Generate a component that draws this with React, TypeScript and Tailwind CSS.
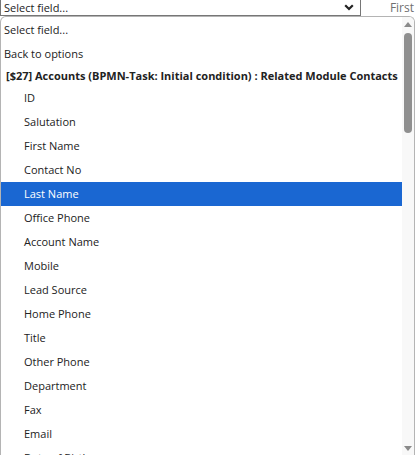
import React from "react";

const children = [
  "ID",
  "Salutation",
  "First Name",
  "Contact No",
  "Last Name",
  "Office Phone",
  "Account Name",
  "Mobile",
  "Lead Source",
  "Home Phone",
  "Title",
  "Other Phone",
  "Department",
  "Fax",
  "Email",
  "Date of Birth",
];

export default function App() {
  return (
    <div
      className="w-[415px] h-[455px] overflow-hidden bg-white text-[#222]"
      style={{ fontFamily: '"Open Sans", sans-serif' }}
    >
      <div className="flex h-[16px]">
        <div className="relative w-[361px] h-[16px] border-x border-b border-[#767676] flex items-center pl-[3px] shrink-0">
          <span className="text-[11px] leading-[15px]">Select field...</span>
          <svg
            className="absolute left-[343px] top-[4px]"
            width="10"
            height="7"
            viewBox="0 0 10 7"
          >
            <path d="M1.2 1.2 L5 5 L8.8 1.2" fill="none" stroke="#222" strokeWidth="2.2" />
          </svg>
        </div>
        <div className="flex-1 min-w-0 flex justify-end pr-[1px] overflow-visible">
          <span className="text-[12px] leading-[15px] text-[#707070] whitespace-nowrap">First</span>
        </div>
      </div>
      <div className="h-[439px] border border-b-0 border-[#b4b4b4] rounded-t-[6px] flex overflow-hidden">
        <div className="flex-1 min-w-0 overflow-hidden flex flex-col text-[11px] pt-[1px]">
          <div className="h-[24px] flex items-center pl-[3px] shrink-0">Select field...</div>
          <div className="h-[24px] flex items-center pl-[3px] shrink-0">Back to options</div>
          <div className="h-[20px] flex items-center pl-[5px] font-bold shrink-0 whitespace-nowrap">
            [$27] Accounts (BPMN-Task: Initial condition) : Related Module Contacts
          </div>
          {children.map((c) => (
            <div
              key={c}
              className={
                c === "Last Name"
                  ? "h-[24px] flex items-center pl-[23px] shrink-0 bg-[#1a67d2] text-white"
                  : "h-[24px] flex items-center pl-[23px] shrink-0"
              }
            >
              {c}
            </div>
          ))}
        </div>
        <div className="w-[12px] bg-[#f8f8f8] flex flex-col items-center shrink-0">
          <svg className="mt-[5px]" width="8" height="5" viewBox="0 0 8 5">
            <path d="M0 5 L4 0 L8 5 Z" fill="#8a8a8a" />
          </svg>
          <div className="mt-[6px] w-[8px] h-[100px] rounded-full bg-[#8f8f8f]" />
          <div className="flex-1" />
          <svg className="mb-[4px]" width="8" height="5" viewBox="0 0 8 5">
            <path d="M0 0 L8 0 L4 5 Z" fill="#8a8a8a" />
          </svg>
        </div>
      </div>
    </div>
  );
}
